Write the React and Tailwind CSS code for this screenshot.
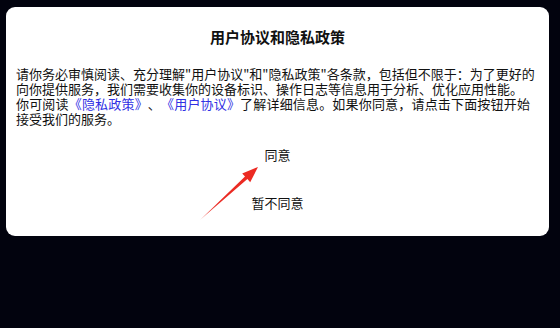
import React from 'react';

const font = { fontFamily: '"Noto Sans CJK SC", "Noto Sans", sans-serif' };

function Arrow() {
  // red pointer arrow drawn over the dialog
  return (
    <svg
      className="absolute left-0 top-0 pointer-events-none"
      width="560"
      height="328"
      viewBox="0 0 560 328"
    >
      <defs>
        <linearGradient id="arr" x1="200" y1="220" x2="258" y2="167" gradientUnits="userSpaceOnUse">
          <stop offset="0" stopColor="#f26a64" />
          <stop offset="0.35" stopColor="#ea2b24" />
          <stop offset="1" stopColor="#ec2a22" />
        </linearGradient>
      </defs>
      <polygon
        points="200,220 245.0,176.5 242.2,173.4 258,167 250.2,182.2 247.4,179.1"
        fill="url(#arr)"
      />
    </svg>
  );
}

const lines = [
  '请你务必审慎阅读、充分理解"用户协议"和"隐私政策"各条款，包括但不限于：为了更好的',
  '向你提供服务，我们需要收集你的设备标识、操作日志等信息用于分析、优化应用性能。',
];

export default function App() {
  return (
    <div className="relative h-[328px] w-[560px] bg-[#02030e] pt-[7px] pl-[6px] pr-[11px]" style={font}>
      <div className="flex flex-col rounded-[9px] bg-white px-[10px] pt-[20px] pb-[9px] text-[#111]">
        <h1 className="text-center text-[15px] font-bold leading-[20px]">用户协议和隐私政策</h1>
        <div className="mt-[19px] flex flex-col text-[13px] whitespace-nowrap [text-spacing-trim:space-all]">
          {lines.map((t) => (
            <div key={t} className="h-[15px] leading-[15px]">{t}</div>
          ))}
          <div className="h-[15px] leading-[15px] tracking-[0.18px]">
            你可阅读<span className="text-[#3030e4]">《隐私政策》</span>、<span className="text-[#3030e4]">《用户协议》</span>了解详细信息。如果你同意，请点击下面按钮开始
          </div>
          <div className="h-[15px] leading-[15px]">接受我们的服务。</div>
        </div>
        <button className="mt-[5px] h-12 text-[13px] leading-[20px] text-[#111]">同意</button>
        <button className="h-12 text-[13px] leading-[20px] text-[#111]">暂不同意</button>
      </div>
      <Arrow />
    </div>
  );
}
